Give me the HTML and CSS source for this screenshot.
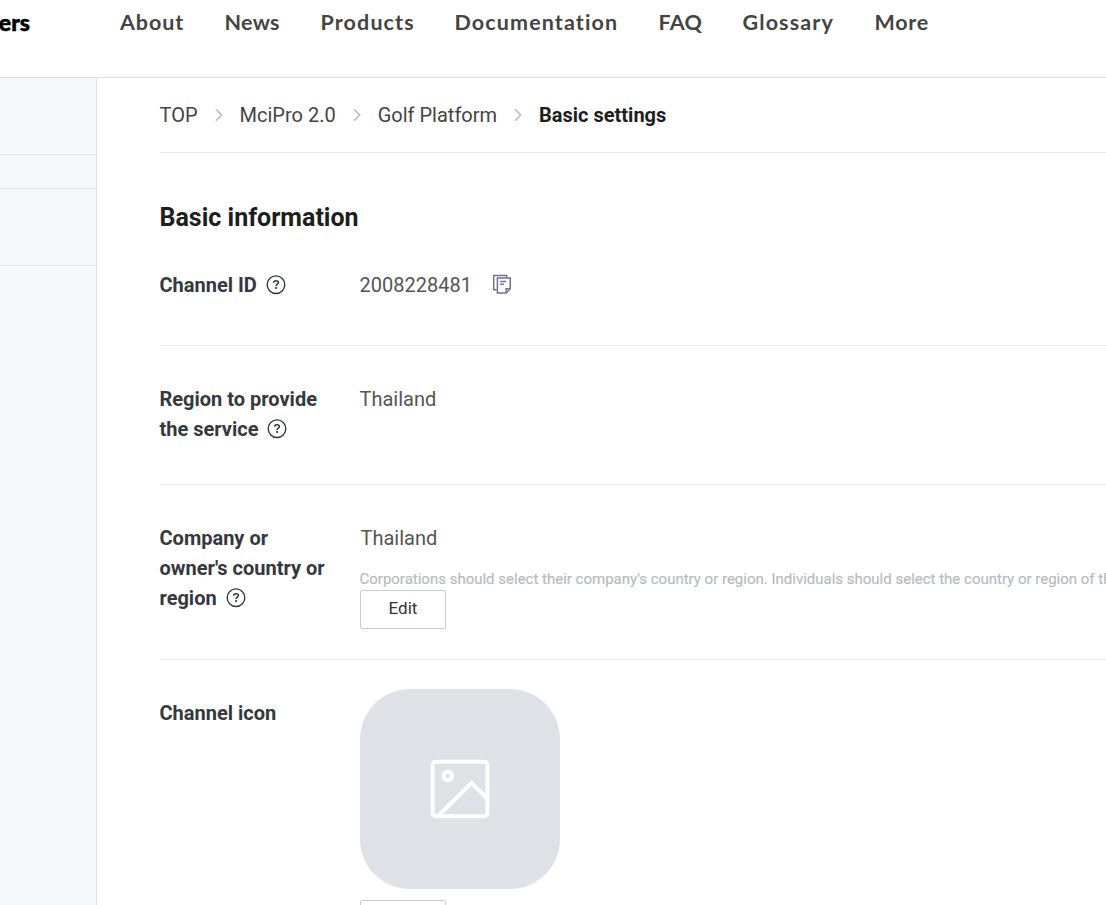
FILE: index.html
```
<!DOCTYPE html>
<html lang="en">
<head>
<meta charset="utf-8">
<title>Basic settings</title>
<link rel="stylesheet" href="styles.css">
</head>
<body>
<svg class="defs" width="0" height="0" aria-hidden="true">
  <symbol id="help" viewBox="0 0 20 20"><circle cx="10" cy="9.7" r="8.8" fill="none" stroke="currentColor" stroke-width="1.4"/><path d="M7.6 7.8C7.6 6.5 8.5 5.7 10 5.7s2.4.8 2.4 1.9c0 1.5-2.3 1.6-2.3 3.3" fill="none" stroke="currentColor" stroke-width="1.6"/><rect x="9.2" y="12.1" width="1.8" height="1.8" fill="currentColor"/></symbol>
  <symbol id="chevron" viewBox="0 0 8 14"><path d="M1 1.2 6.7 7 1 12.8" fill="none" stroke="currentColor" stroke-width="1.6"/></symbol>
</svg>
<header class="header">
  <div class="brand">ers</div>
  <nav class="nav">
    <a class="about">About</a><a class="news">News</a><a class="products">Products</a><a class="docs">Documentation</a><a class="faq">FAQ</a><a class="glossary">Glossary</a><a class="more">More</a>
  </nav>
</header>
<div class="layout">
  <aside class="sidebar"><div class="side-a"></div><div class="side-b"></div><div class="side-a"></div></aside>
  <main class="main">
    <div class="crumbs">
      <a class="top">TOP</a><svg><use href="#chevron"/></svg><a>MciPro 2.0</a><svg><use href="#chevron"/></svg><a class="platform">Golf Platform</a><svg><use href="#chevron"/></svg><strong>Basic settings</strong>
    </div>
    <h1>Basic information</h1>
    <section class="row row-id">
      <div class="label">Channel ID<svg class="help"><use href="#help"/></svg></div>
      <div class="value id-value"><span>2008228481</span>
        <svg class="copy" viewBox="0 0 20 20" fill="none" stroke="#6f7294" stroke-width="1.5"><path d="M4.8 15.8H1.7V1.5h13v2.2"/><path d="M5.4 4h12.8v10.7L14.2 18.9H5.4z"/><path d="M18 14.7h-3.8v4M8.2 7.6h5.8M8.2 10.3h3.8"/></svg>
      </div>
    </section>
    <section class="row row-region">
      <div class="label">Region to provide<br>the service<svg class="help"><use href="#help"/></svg></div>
      <div class="value">Thailand</div>
    </section>
    <section class="row row-company">
      <div class="label">Company or<br>owner's country or<br>region<svg class="help"><use href="#help"/></svg></div>
      <div class="value"><div class="country">Thailand</div><p class="note">Corporations should select their company's country or region. Individuals should select the country or region of th</p><button class="button">Edit</button></div>
    </section>
    <section class="row row-icon">
      <div class="label">Channel icon</div>
      <div class="value"><div class="placeholder"><svg width="60" height="60" viewBox="0 0 60 60" fill="none" stroke="#fff" stroke-width="4"><rect x="2.7" y="2.7" width="54.6" height="54.6" rx="3"/><circle cx="17.7" cy="17" r="4.2"/><path d="M8 57 41.5 24 57 39.5"/></svg></div><button class="button"></button></div>
    </section>
  </main>
</div>
</body>
</html>
```
FILE: styles.css
```
* { box-sizing: border-box; }
body { margin: 0; height: 905px; overflow: hidden; background: #fff; color: #35393d; font: 20px/30px Roboto, sans-serif; }
.defs { display: block; }
.header { display: flex; height: 78px; border-bottom: 1px solid #dcdfe3; font-family: Lato, sans-serif; }
.brand { display: flex; justify-content: flex-end; width: 30px; height: 44px; overflow: hidden; padding-top: 7px; flex: none; color: #000; font-size: 23px; font-weight: 900; -webkit-text-stroke: .5px #000; }
.nav { display: grid; grid-template-columns: 104.5px 96px 134px 204px 84px 132px 80px; margin-left: 90px; padding-top: 7px; color: #444; font-size: 21.5px; font-weight: 700; white-space: nowrap; letter-spacing: .3px; }
.about { letter-spacing: .9px; }
.products, .docs, .glossary { letter-spacing: 1.12px; }
.more { letter-spacing: .7px; }
.layout { display: flex; height: 827px; }
.sidebar { width: 97px; flex: none; background: #f7f8fa; border-right: 1px solid #dfe2e6; }
.side-a { height: 77px; border-bottom: 1px solid #dfe2e6; }
.side-b { height: 34px; border-bottom: 1px solid #dfe2e6; }
.main { flex: 1; min-width: 0; overflow: hidden; padding-left: 63px; }
.crumbs { display: flex; align-items: center; height: 75px; border-bottom: 1px solid #e8e9eb; color: #444; white-space: nowrap; }
.crumbs .top { margin-left: -.5px; }
.crumbs svg { width: 8px; height: 14px; margin: 0 17px; flex: none; color: #b7bcc2; }
.crumbs strong { color: #1e1e1e; font-weight: 700; }
h1 { margin: 49px 0 0; color: #1e1e1e; font-size: 25px; line-height: 32px; font-weight: 700; text-indent: -.5px; }
.row { display: flex; border-bottom: 1px solid #ebecee; white-space: nowrap; }
.label { width: 200.5px; margin-left: -.5px; flex: none; font-weight: 700; }
.value { color: #555; }
.help { width: 20px; height: 20px; margin-left: 9px; vertical-align: -3px; }
.row-id { height: 112px; padding-top: 36px; }
.id-value { display: flex; align-items: flex-start; text-indent: -.5px; }
.copy { width: 20px; height: 20px; margin: 4px 0 0 20px; }
.row-region { height: 139px; padding-top: 38px; }
.row-region .value { text-indent: -.5px; }
.row-company { height: 175px; padding-top: 38px; }
.country { text-indent: .5px; }
.note { margin: 15px 0 0; color: #b7bcc2; font-size: 15px; line-height: 22px; text-indent: -.5px; letter-spacing: -.002px; -webkit-text-stroke: .2px #b7bcc2; }
.button { display: block; width: 86px; height: 39px; padding: 0 0 2px; background: #fff; border: 1px solid #c8cbd0; border-radius: 2px; color: #303438; font: 17px/35px Roboto, sans-serif; }
.row-icon { padding-top: 29px; }
.row-icon .label { padding-top: 9px; }
.placeholder { display: flex; align-items: center; justify-content: center; width: 200px; height: 200px; margin-bottom: 11px; border-radius: 50px; background: #dfe1e6; }
```
